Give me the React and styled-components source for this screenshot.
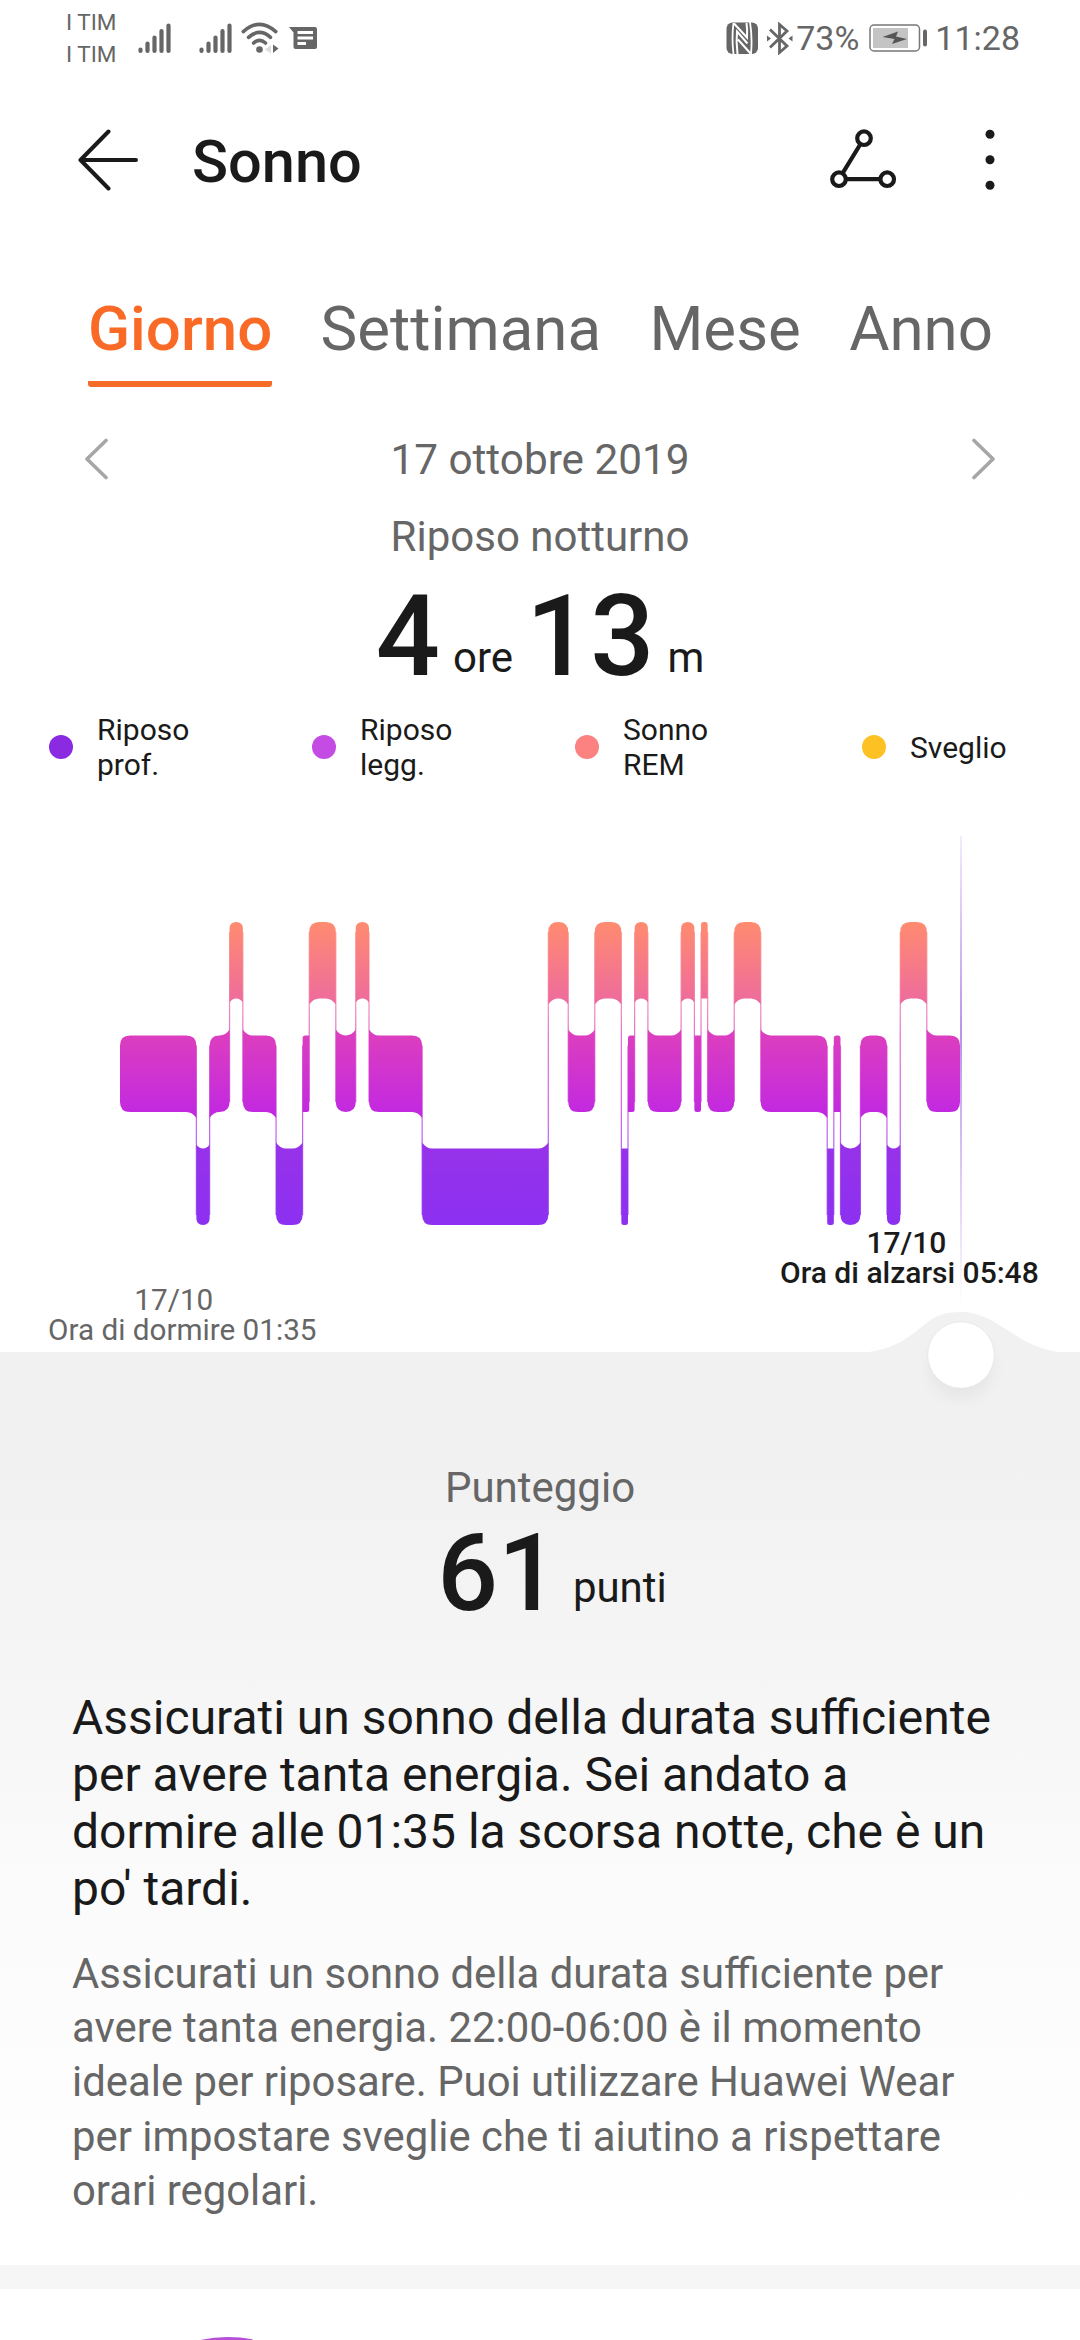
import styled, { createGlobalStyle } from 'styled-components';

const stages = [
  // [start minute, level]
  [0, 1], [23, 2], [27, 1], [33, 0], [37, 1], [47, 2], [55, 1], [57, 0],
  [65, 1], [71, 0], [75, 1], [91, 2], [129, 0], [135, 1], [143, 0], [151, 2],
  [153, 1], [155, 0], [159, 1], [169, 0], [173, 1], [175, 0], [177, 1],
  [185, 0], [193, 1], [213, 2], [215, 1], [217, 2], [223, 1], [231, 2],
  [235, 0], [243, 1],
];
const totalMinutes = 253;
const chartLeft = 120;
const chartWidth = 840;
const levelTop = [86, 199.5, 312.5];
const barHeight = 76.5;

const xAt = (minute) => chartLeft + (minute * chartWidth) / totalMinutes;

const segments = stages.map(([start, level], i) => ({
  a: xAt(start),
  b: xAt(i < stages.length - 1 ? stages[i + 1][0] : totalMinutes),
  level,
  prev: i > 0 ? stages[i - 1][1] : level,
  next: i < stages.length - 1 ? stages[i + 1][1] : level,
}));

// corners are rounded on free sides and flare out towards a neighbour level
const barPath = ({ a, b, level, prev, next }) => {
  const thin = b - a < 8;
  const r = thin ? 2.5 : Math.min(10, (b - a) / 2);
  const f = thin ? 0 : r * 0.6;
  const t = levelTop[level];
  const d = t + barHeight;
  const m = r * 0.4;
  return [
    prev < level
      ? `M${a} ${t - f}Q${a + m} ${t} ${a + (thin ? 0 : r)} ${t}`
      : `M${a} ${t + r}Q${a} ${t} ${a + r} ${t}`,
    next < level
      ? `L${b - (thin ? 0 : r)} ${t}Q${b - m} ${t} ${b} ${t - f}`
      : `L${b - r} ${t}Q${b} ${t} ${b} ${t + r}`,
    next > level
      ? `L${b} ${d + f}Q${b - m} ${d} ${b - (thin ? 0 : r)} ${d}`
      : `L${b} ${d - r}Q${b} ${d} ${b - r} ${d}`,
    prev > level
      ? `L${a + (thin ? 0 : r)} ${d}Q${a + m} ${d} ${a} ${d + f}`
      : `L${a + r} ${d}Q${a} ${d} ${a} ${d - r}`,
    'Z',
  ].join('');
};

const legend = [
  { color: '#8a2be2', label: 'Riposo prof.', width: 263 },
  { color: '#c44be4', label: 'Riposo legg.', width: 263 },
  { color: '#fb8281', label: 'Sonno REM', width: 287 },
  { color: '#fdc124', label: 'Sveglio', width: 200 },
];

const tabs = ['Giorno', 'Settimana', 'Mese', 'Anno'];

function SignalIcon() {
  return (
    <svg width='34' height='32' viewBox='0 0 34 32'>
      <g stroke='#666' strokeWidth='4.2' strokeLinecap='round'>
        <path d='M2.5 27.5v1.4M9.5 21.5v7.4M16.5 15.5v13.4M23.5 9v19.9M30.5 3.5v25.4' />
      </g>
    </svg>
  );
}

function WifiIcon() {
  return (
    <svg width='38' height='32' viewBox='0 0 38 32'>
      <g fill='none' stroke='#666' strokeWidth='3.6' strokeLinecap='round'>
        <path d='M2.3 9.6Q18.5 -5 34.8 9.6' />
        <path d='M7.5 15.4Q18.5 5.5 29.5 15.4' />
        <path d='M12.6 21Q18.5 15.6 24.5 21' />
      </g>
      <circle cx='18.5' cy='27.5' r='3.3' fill='#666' />
      <path d='M30 23v8.5l-6-4z' fill='#ddd' />
      <path d='M32 22.5v8.5l5.5-4.5z' fill='#666' />
    </svg>
  );
}

function MessageIcon() {
  return (
    <svg width='29' height='24' viewBox='0 0 29 24'>
      <path
        fill='#666'
        fillRule='evenodd'
        d='M0 1H26Q28 1 28 3V21Q28 23 26 23H6.5Q4.5 23 4.5 21V6.5ZM8.5 5V8H24V5ZM8.5 10.5V13.5H24V10.5ZM8.5 16V19H17V16Z'
      />
    </svg>
  );
}

function NfcIcon() {
  return (
    <svg width='33' height='33' viewBox='0 0 33 33'>
      <rect x='0.5' y='0.5' width='31.5' height='31.5' rx='6' fill='#666' />
      <path
        d='M7.5 1Q5.5 16 7.5 32M24 0Q26.5 16 25 32'
        stroke='#fff'
        strokeWidth='1.8'
        fill='none'
      />
      <path
        d='M8 1.5L21 15.5Q21.5 8 20.5 1M11.5 32Q10 20 11 9.5L21.5 21.500M12 17.5L24.5 31.5'
        stroke='#fff'
        strokeWidth='2'
        fill='none'
      />
    </svg>
  );
}

function BluetoothIcon() {
  return (
    <svg width='26' height='33' viewBox='0 0 26 33'>
      <path
        d='M3 7.5L20 24L12.5 30.5V2.5L20 9L3 25.5'
        fill='none'
        stroke='#666'
        strokeWidth='2.8'
      />
      <path d='M0 13.5l4 3-4 3zM25.5 13.5l-4 3 4 3z' fill='#666' />
    </svg>
  );
}

function BatteryIcon() {
  return (
    <svg width='59' height='28' viewBox='0 0 59 28'>
      <rect x='1' y='1' width='49.5' height='26' rx='4' fill='none' stroke='#777' strokeWidth='1.5' />
      <rect x='4' y='4' width='35' height='20' fill='#c4c4c4' />
      <rect x='54' y='5.5' width='4' height='17' rx='2' fill='#666' />
      <path d='M13.5 13L29 7.5L27 12.5L38 15L23 20L25.5 15Z' fill='#555' />
    </svg>
  );
}

function BackIcon() {
  return (
    <svg width='62' height='62' viewBox='0 0 62 62'>
      <path
        d='M31.5 2.5L3.5 31L31.5 59.5M4 31H59'
        fill='none'
        stroke='#1a1a1a'
        strokeWidth='4'
        strokeLinecap='round'
        strokeLinejoin='round'
      />
    </svg>
  );
}

function ShareIcon() {
  return (
    <svg width='68' height='62' viewBox='0 0 68 62'>
      <g fill='none' stroke='#1a1a1a' strokeWidth='4.2'>
        <circle cx='34' cy='9.2' r='6.8' />
        <circle cx='9' cy='50.2' r='6.8' />
        <circle cx='57.2' cy='50.2' r='6.8' />
        <path d='M30.5 15L12.5 44.4M16 50.2H50.5' />
      </g>
    </svg>
  );
}

function MoreIcon() {
  return (
    <svg width='10' height='62' viewBox='0 0 10 62'>
      <g fill='#1a1a1a'>
        <circle cx='5' cy='5.2' r='4.5' />
        <circle cx='5' cy='30.8' r='4.5' />
        <circle cx='5' cy='56.2' r='4.5' />
      </g>
    </svg>
  );
}

function Chevron({ flip }) {
  return (
    <svg width='24' height='42' viewBox='0 0 24 42'>
      <path
        d={flip ? 'M2 2.5L21 21L2 39.5' : 'M22 2.5L3 21L22 39.5'}
        fill='none'
        stroke='#a6a6a6'
        strokeWidth='3.6'
        strokeLinecap='round'
        strokeLinejoin='round'
      />
    </svg>
  );
}

function SleepChart() {
  return (
    <svg width='1080' height='516' viewBox='0 0 1080 516'>
      <defs>
        <linearGradient id='stage' gradientUnits='userSpaceOnUse' x1='0' y1='86' x2='0' y2='389'>
          <stop offset='0' stopColor='#ff8b70' />
          <stop offset='0.25' stopColor='#ef6d9a' />
          <stop offset='0.375' stopColor='#dc3ebf' />
          <stop offset='0.63' stopColor='#c229e0' />
          <stop offset='0.75' stopColor='#9632ea' />
          <stop offset='1' stopColor='#8c30f1' />
        </linearGradient>
        <linearGradient id='cursor' x1='0' y1='0' x2='0' y2='1'>
          <stop offset='0' stopColor='#f3ebfc' />
          <stop offset='0.42' stopColor='#b994e8' />
          <stop offset='0.85' stopColor='#ece0f9' />
          <stop offset='1' stopColor='#fff' />
        </linearGradient>
      </defs>
      <g fill='url(#stage)'>
        {segments.slice(1).map(({ a, level, prev }) => (
          <rect
            key={a}
            x={a - 0.6}
            y={levelTop[Math.min(level, prev)] + 10}
            width='1.2'
            height={levelTop[Math.max(level, prev)] - levelTop[Math.min(level, prev)] + barHeight - 20}
            opacity='0.75'
          />
        ))}
        {segments.map((segment) => (
          <path key={segment.a} d={barPath(segment)} />
        ))}
      </g>
      <rect x='960' y='0' width='2' height='468' fill='url(#cursor)' />
    </svg>
  );
}

function SliderKnob() {
  return (
    <svg width='240' height='124' viewBox='840 1306 240 124'>
      <defs>
        <filter id='knobShadow' x='-50%' y='-50%' width='200%' height='200%'>
          <feGaussianBlur stdDeviation='8' />
        </filter>
      </defs>
      <path
        d='M858 1353C893 1351 908 1338 924 1325C936 1315 945 1312 960.5 1312C978 1312 990 1319 1004 1328C1022 1340 1040 1351 1068 1353Z'
        fill='#f1f1f1'
      />
      <circle cx='961' cy='1367' r='32' fill='#000' opacity='0.045' filter='url(#knobShadow)' />
      <circle cx='961' cy='1355' r='33.3' fill='#fff' stroke='#e4e4e4' strokeWidth='0.8' />
    </svg>
  );
}

function App() {
  return (
    <>
      <GlobalStyle />
      <Screen>
        <StatusBar>
          <Carriers>
            <span>I TIM</span>
            <span>I TIM</span>
          </Carriers>
          <StatusIcon $left={22}><SignalIcon /></StatusIcon>
          <StatusIcon $left={27}><SignalIcon /></StatusIcon>
          <StatusIcon $left={8}><WifiIcon /></StatusIcon>
          <StatusIcon $left={10}><MessageIcon /></StatusIcon>
          <StatusRight>
            <NfcIcon />
            <StatusIcon $left={8}><BluetoothIcon /></StatusIcon>
            <StatusText $left={3}>73%</StatusText>
            <StatusIcon $left={10}><BatteryIcon /></StatusIcon>
            <StatusText $left={7}>11:28</StatusText>
          </StatusRight>
        </StatusBar>

        <Header>
          <BackIcon />
          <Title>Sonno</Title>
          <Actions>
            <ShareIcon />
            <MoreIcon />
          </Actions>
        </Header>

        <Tabs>
          {tabs.map((tab, i) => (
            <Tab key={tab} $active={i === 0}>{tab}</Tab>
          ))}
        </Tabs>

        <DateRow>
          <Chevron />
          <DateText>17 ottobre 2019</DateText>
          <Chevron flip />
        </DateRow>

        <Subtitle>Riposo notturno</Subtitle>
        <Duration>
          <Big>4</Big>
          <Unit $left={13}>ore</Unit>
          <Big $left={13}>13</Big>
          <Unit $left={13}>m</Unit>
        </Duration>

        <Legend>
          {legend.map(({ color, label, width }) => (
            <LegendItem key={label} $width={width}>
              <Dot $color={color} />
              <LegendLabel>{label}</LegendLabel>
            </LegendItem>
          ))}
        </Legend>

        <ChartArea>
          <SleepChart />
          <TimeLabel $x={48} $y={449} $shift={17}>
            <span>17/10</span>
            <span>Ora di dormire 01:35</span>
          </TimeLabel>
          <TimeLabel $x={780} $y={392} $shift={6} $strong>
            <span>17/10</span>
            <span>Ora di alzarsi 05:48</span>
          </TimeLabel>
          <Knob>
            <SliderKnob />
          </Knob>
        </ChartArea>

        <ScorePanel>
          <Caption>Punteggio</Caption>
          <Score>
            <Big $size={107}>61</Big>
            <Unit $left={14} $lift={8}>punti</Unit>
          </Score>
          <Advice>
            Assicurati un sonno della durata sufficiente per avere tanta
            energia. Sei andato a dormire alle 01:35 la scorsa notte, che è un
            po' tardi.
          </Advice>
          <Detail>
            Assicurati un sonno della durata sufficiente per avere tanta
            energia. 22:00-06:00 è il momento ideale per riposare. Puoi
            utilizzare Huawei Wear per impostare sveglie che ti aiutino a
            rispettare orari regolari.
          </Detail>
        </ScorePanel>
        <Divider />
        <NextCard>
          <svg width='264' height='264' viewBox='0 0 264 264'>
            <path
              d='M3 132A129 129 0 0 1 156 5.3'
              fill='none'
              stroke='#b44fd8'
              strokeWidth='6'
            />
          </svg>
        </NextCard>
      </Screen>
    </>
  );
}

const GlobalStyle = createGlobalStyle`
  * {
    box-sizing: border-box;
  }
  body {
    margin: 0;
    background: #fff;
    font-family: Roboto, 'Liberation Sans', sans-serif;
    color: #1a1a1a;
  }
  svg {
    display: block;
    flex-shrink: 0;
  }
`;

const Screen = styled.main`
  width: 1080px;
  height: 2340px;
  overflow: hidden;
  background: #fff;
  display: flex;
  flex-direction: column;
  > * {
    flex-shrink: 0;
  }
`;

const StatusBar = styled.div`
  height: 76px;
  padding-left: 66px;
  padding-right: 60px;
  display: flex;
  align-items: center;
  color: #666;
`;

const Carriers = styled.div`
  display: flex;
  flex-direction: column;
  width: 50px;
  font-size: 22.5px;
  line-height: 32px;
  white-space: nowrap;
`;

const StatusIcon = styled.div`
  margin-left: ${({ $left }) => $left}px;
`;

const StatusRight = styled.div`
  margin-left: auto;
  display: flex;
  align-items: center;
`;

const StatusText = styled.span`
  margin-left: ${({ $left }) => $left}px;
  font-size: 34px;
  line-height: 40px;
`;

const Header = styled.header`
  height: 167px;
  padding: 0 85px 0 77px;
  display: flex;
  align-items: center;
`;

const Title = styled.h1`
  margin: 4px 0 0 53px;
  font-size: 59.5px;
  font-weight: 500;
  line-height: 70px;
`;

const Actions = styled.div`
  margin-left: auto;
  display: flex;
  align-items: center;
  gap: 87px;
`;

const Tabs = styled.nav`
  height: 144px;
  padding: 52px 87px 0 88px;
  display: flex;
  justify-content: space-between;
`;

const Tab = styled.span`
  height: 92px;
  font-size: 61.8px;
  line-height: 68px;
  font-weight: ${({ $active }) => ($active ? 500 : 400)};
  color: ${({ $active }) => ($active ? '#fa6a27' : '#666')};
  border-bottom: 6px solid ${({ $active }) => ($active ? '#f56b28' : 'transparent')};
  border-radius: 3px;
`;

const DateRow = styled.div`
  height: 125px;
  padding: 18px 84px 0;
  display: flex;
  align-items: center;
  justify-content: space-between;
`;

const Caption = styled.span`
  font-size: 42px;
  line-height: 50px;
  color: #666;
`;

const DateText = styled(Caption)`
  margin-top: 3px;
  font-size: 42.3px;
`;

const Subtitle = styled(Caption)`
  text-align: center;
`;

const Duration = styled.div`
  height: 129px;
  margin-top: 7px;
  display: flex;
  justify-content: center;
  align-items: baseline;
`;

const Big = styled.span`
  margin-left: ${({ $left }) => $left || 0}px;
  font-size: ${({ $size }) => $size || 113}px;
  line-height: 136px;
  font-weight: 500;
`;

const Unit = styled.span`
  margin-left: ${({ $left }) => $left}px;
  font-size: 42px;
  position: relative;
  top: -${({ $lift }) => $lift || 3}px;
`;

const Legend = styled.div`
  height: 84px;
  margin-top: 7px;
  padding-left: 49px;
  display: flex;
  align-items: center;
`;

const LegendItem = styled.div`
  width: ${({ $width }) => $width}px;
  display: flex;
  align-items: center;
`;

const Dot = styled.i`
  width: 24px;
  height: 24px;
  border-radius: 50%;
  background: ${({ $color }) => $color};
`;

const LegendLabel = styled.span`
  width: 110px;
  margin-left: 24px;
  font-size: 30px;
  line-height: 35px;
`;

const ChartArea = styled.section`
  position: relative;
  height: 516px;
  margin-top: 47px;
`;

const TimeLabel = styled.div`
  position: absolute;
  left: ${({ $x }) => $x}px;
  top: ${({ $y }) => $y}px;
  display: flex;
  flex-direction: column;
  align-items: center;
  font-size: ${({ $strong }) => ($strong ? 30 : 29.7)}px;
  line-height: 29.5px;
  white-space: nowrap;
  font-weight: ${({ $strong }) => ($strong ? 500 : 400)};
  color: ${({ $strong }) => ($strong ? '#1a1a1a' : '#666')};
  > :first-child {
    padding-right: ${({ $shift }) => $shift}px;
  }
`;

const Knob = styled.div`
  position: absolute;
  left: 840px;
  top: 470px;
  z-index: 1;
`;

const ScorePanel = styled.section`
  height: 913px;
  padding: 111px 72px 0;
  display: flex;
  flex-direction: column;
  align-items: center;
  background: linear-gradient(#f1f1f1 0%, #f1f1f1 12%, #f6f6f6 38%, #fbfbfb 60%, #fff 98%);
`;

const Score = styled.div`
  height: 129px;
  margin: -7px 0 0 24px;
  display: flex;
  align-items: baseline;
`;

const Advice = styled.p`
  width: 936px;
  margin: 54px 0 0;
  font-size: 48px;
  line-height: 57px;
`;

const Detail = styled.p`
  width: 936px;
  margin: 30px 0 0;
  font-size: 41.85px;
  line-height: 54.2px;
  color: #666;
`;

const Divider = styled.div`
  height: 24px;
  background: #f6f6f6;
`;

const NextCard = styled.section`
  height: 51px;
  padding: 48px 0 0 96px;
  overflow: hidden;
`;

export default App;
